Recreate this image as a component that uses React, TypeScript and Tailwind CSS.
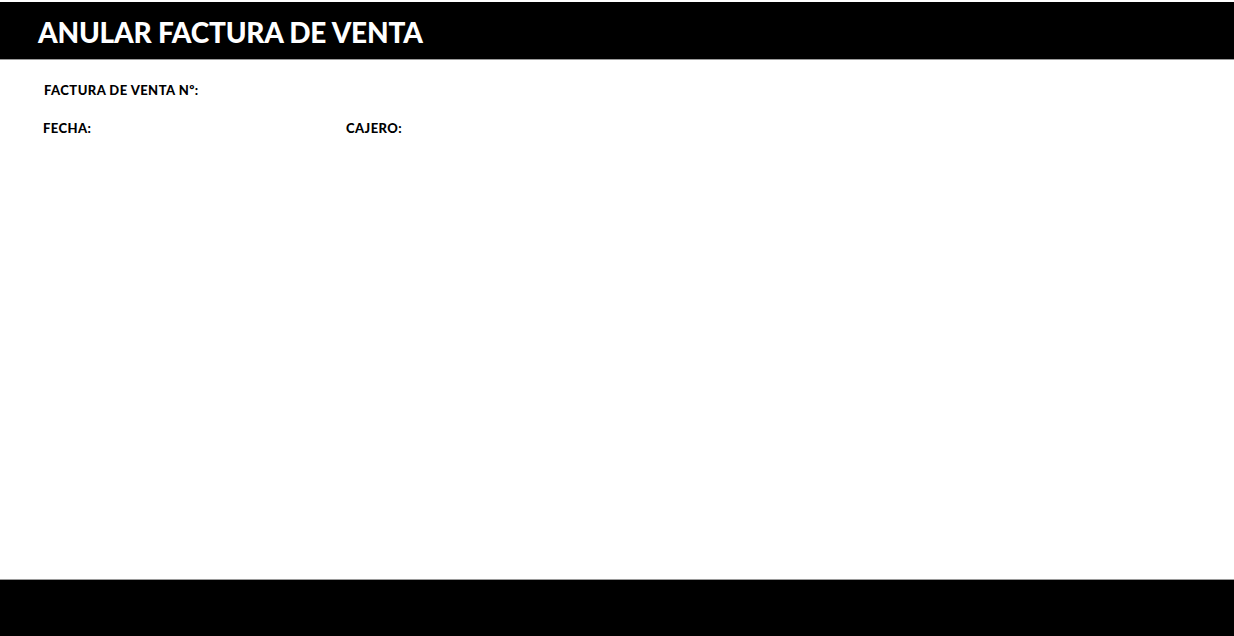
export default function App() {
  return (
    <div className="w-[1234px] h-[636px] bg-white flex flex-col overflow-hidden" style={{ fontFamily: "Lato, 'Noto Sans', sans-serif" }}>
      <div className="mt-[2px] h-[58px] bg-black border-b border-[#9a9a9a] flex items-center pl-[38px] pt-[3px]">
        <h1 className="text-white text-[28px] font-black tracking-[-0.2px] leading-none">ANULAR FACTURA DE VENTA</h1>
      </div>
      <div className="flex-1 flex flex-col pl-[44px] pt-[22px]">
        <div className="text-[13px] font-black text-black leading-[16px] tracking-[0.45px]">FACTURA DE VENTA Nº:</div>
        <div className="flex mt-[22px] text-[13px] font-black text-black leading-[16px] tracking-[0.45px]">
          <div className="w-[303px] -ml-[1px]">FECHA:</div>
          <div>CAJERO:</div>
        </div>
      </div>
      <div className="h-[57px] bg-black border-t border-[#9a9a9a]"></div>
    </div>
  );
}
